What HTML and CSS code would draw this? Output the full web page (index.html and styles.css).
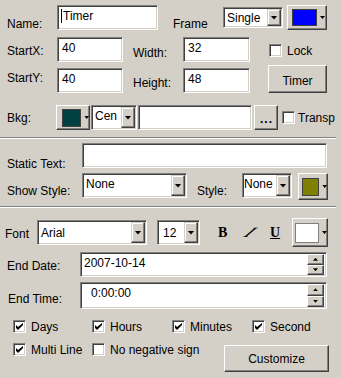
FILE: index.html
```html
<!DOCTYPE html>
<html>

  <head>
    <title>Timer Properties</title>
    <link rel="stylesheet" href="styles.css">
  </head>

  <body>
    <div class="dlg">
      <div class="row row-name">
        <span class="lbl lbl-left pt12">Name:</span>
        <div class="edit name-edit"><span class="caret"></span>Timer</div>
        <span class="lbl frame-lbl pt12">Frame</span>
        <div class="combo frame-combo"><span class="val">Single</span><span class="drop"><i class="arrow"></i></span></div>
        <div class="colorbtn frame-color"><span class="swatch"></span><i class="tri"></i></div>
      </div>

      <div class="row row-startx">
        <span class="lbl lbl-left pt7">StartX:</span>
        <div class="edit num-edit">40</div>
        <span class="lbl lbl-mid pt9">Width:</span>
        <div class="edit num-edit wide">32</div>
        <span class="check lock-check"></span>
        <span class="lbl check-lbl pt7">Lock</span>
      </div>

      <div class="row row-starty">
        <span class="lbl lbl-left pt3">StartY:</span>
        <div class="edit num-edit">40</div>
        <span class="lbl lbl-mid pt8">Height:</span>
        <div class="edit num-edit wide">48</div>
        <div class="btn timer-btn">Timer</div>
      </div>

      <div class="row row-bkg">
        <span class="lbl bkg-lbl pt6">Bkg:</span>
        <div class="colorbtn bkg-color"><span class="swatch"></span><i class="tri"></i></div>
        <div class="combo align-combo"><span class="val">Cen</span><span class="drop"><i class="arrow"></i></span></div>
        <div class="edit text-edit"></div>
        <div class="btn dots-btn">...</div>
        <span class="check transp-check"></span>
        <span class="lbl transp-lbl pt6">Transp</span>
      </div>

      <div class="sep sep-top"></div>

      <div class="row row-static">
        <span class="lbl wide-lbl pt14">Static Text:</span>
        <div class="edit static-edit"></div>
      </div>

      <div class="row row-show">
        <span class="lbl wide-lbl pt11">Show Style:</span>
        <div class="combo show-combo"><span class="val">None</span><span class="drop"><i class="arrow"></i></span></div>
        <span class="lbl style-lbl pt11">Style:</span>
        <div class="combo style-combo"><span class="val">None</span><span class="drop"><i class="arrow"></i></span></div>
        <div class="colorbtn style-color"><span class="swatch"></span><i class="tri"></i></div>
      </div>

      <div class="sep sep-mid"></div>

      <div class="row row-font">
        <span class="lbl font-lbl pt7">Font</span>
        <div class="combo font-combo"><span class="val">Arial</span><span class="drop"><i class="arrow"></i></span></div>
        <div class="combo size-combo"><span class="val">12</span><span class="drop"><i class="arrow"></i></span></div>
        <span class="fmt fmt-bold">B</span>
        <span class="fmt fmt-ital"><span>I</span></span>
        <span class="fmt fmt-under">U</span>
        <div class="colorbtn font-color"><span class="swatch"></span><i class="tri"></i></div>
      </div>

      <div class="row row-date">
        <span class="lbl date-lbl pt7">End Date:</span>
        <div class="spinfield">
          <span class="val">2007-10-14</span>
          <span class="spin"><span class="sbtn"><i class="up"></i></span><span class="sbtn"><i class="down"></i></span></span>
        </div>
      </div>

      <div class="row row-time">
        <span class="lbl time-lbl pt10">End Time:</span>
        <div class="spinfield tall">
          <span class="val time-val">0:00:00</span>
          <span class="spin"><span class="sbtn"><i class="up"></i></span><span class="sbtn"><i class="down"></i></span></span>
        </div>
      </div>

      <div class="row row-units">
        <label class="opt opt-days"><span class="check on"></span>Days</label>
        <label class="opt"><span class="check on"></span>Hours</label>
        <label class="opt"><span class="check on"></span>Minutes</label>
        <label class="opt"><span class="check on"></span>Second</label>
      </div>

      <div class="row row-flags">
        <label class="opt opt-days"><span class="check on"></span>Multi Line</label>
        <label class="opt opt-neg"><span class="check"></span>No negative sign</label>
        <div class="btn custom-btn">Customize</div>
      </div>
    </div>
  </body>

</html>
```

FILE: styles.css
```css
body {
  margin: 0;
  background-color: #d4d0c8;
}

.dlg {
  width: 341px;
  height: 378px;
  padding-top: 5px;
  box-sizing: border-box;
  font-family: "Liberation Sans", Arial, sans-serif;
  font-size: 12px;
  line-height: 14px;
  color: #000;
  overflow: hidden;
}

/* rows */

.row {
  display: flex;
  align-items: flex-start;
  height: 25px;
}

.row-startx { margin-top: 7px; }
.row-starty { margin-top: 6px; }
.row-bkg { margin-top: 12px; }
.row-static { margin-top: 4px; }
.row-show { margin-top: 5px; }
.row-font { margin-top: 12px; }
.row-date { margin-top: 7px; }
.row-time { margin-top: 5px; height: 27px; }
.row-units { margin-top: 11px; height: 13px; }
.row-flags { margin-top: 10px; height: 29px; }

.sep {
  width: 336px;
  height: 0;
  border-top: 1px solid #808080;
  border-bottom: 1px solid #fff;
}

.sep-top { margin-top: 7px; }
.sep-mid { margin-top: 8px; }

/* labels */

.lbl {
  flex: none;
  white-space: nowrap;
}

.pt3 { padding-top: 3px; }
.pt6 { padding-top: 6px; }
.pt7 { padding-top: 7px; }
.pt8 { padding-top: 8px; }
.pt9 { padding-top: 9px; }
.pt10 { padding-top: 10px; }
.pt11 { padding-top: 11px; }
.pt12 { padding-top: 12px; }
.pt14 { padding-top: 14px; }

.lbl-left { margin-left: 7px; width: 50px; }
.lbl-mid { margin-left: 10px; width: 50px; }
.frame-lbl { margin-left: 15px; width: 50px; }
.check-lbl { margin-left: 5px; }
.bkg-lbl { margin-left: 7px; width: 49px; }
.transp-lbl { margin-left: 3px; }
.wide-lbl { margin-left: 7px; width: 75px; }
.style-lbl { margin-left: 10px; width: 45px; }
.font-lbl { margin-left: 5px; width: 32px; }
.date-lbl { margin-left: 7px; width: 73px; }
.time-lbl { margin-left: 8px; width: 72px; }

/* sunken fields */

.edit,
.combo,
.spinfield,
.check {
  flex: none;
  box-sizing: border-box;
  background-color: #fff;
  border: 1px solid;
  border-color: #808080 #fff #fff #808080;
  box-shadow: inset 1px 1px 0 #404040, inset -1px -1px 0 #d4d0c8;
}

.edit {
  height: 25px;
  padding: 3px 4px;
  white-space: nowrap;
}

.name-edit { width: 101px; padding-left: 3px; }
.num-edit { width: 66px; }
.num-edit.wide { width: 67px; }
.text-edit { width: 114px; margin-left: 1px; }
.static-edit { width: 245px; }

.caret {
  display: inline-block;
  width: 1px;
  height: 14px;
  margin-right: 1px;
  vertical-align: -3px;
  background-color: #000;
}

.combo {
  display: flex;
  height: 25px;
  padding: 1px;
}

.combo .val {
  flex: 1;
  padding: 2px 0 0 2px;
  overflow: hidden;
  white-space: nowrap;
}

.frame-combo { width: 60px; height: 21px; margin-top: 2px; }
.align-combo { width: 46px; margin-left: 1px; }
.show-combo { width: 105px; }
.style-combo { width: 50px; }
.style-combo .val { padding-left: 0; }
.font-combo { width: 110px; }
.font-combo .val { padding-top: 4px; }
.size-combo { width: 43px; margin-left: 10px; }
.size-combo .val { padding: 4px 0 0 4px; }

/* raised parts */

.drop,
.sbtn,
.btn,
.colorbtn {
  box-sizing: border-box;
  background-color: #d4d0c8;
  border: 1px solid;
  border-color: #fff #404040 #404040 #fff;
  box-shadow: inset -1px -1px 0 #808080, inset 1px 1px 0 #d4d0c8;
}

.drop {
  flex: none;
  width: 14px;
  display: flex;
  align-items: center;
  justify-content: center;
  border-color: #d4d0c8 #404040 #404040 #d4d0c8;
  box-shadow: inset -1px -1px 0 #808080, inset 1px 1px 0 #fff;
}

.arrow {
  width: 7px;
  height: 4px;
  background-color: #000;
  clip-path: polygon(0 0, 100% 0, 50% 100%);
}

.btn {
  flex: none;
  display: flex;
  align-items: center;
  justify-content: center;
}

.timer-btn {
  width: 59px;
  height: 28px;
  margin: -3px 0 0 18px;
  padding-top: 3px;
}

.dots-btn {
  width: 24px;
  height: 25px;
  margin-left: 2px;
  font-weight: bold;
  letter-spacing: 1px;
  padding: 2px 0 0 1px;
}

.custom-btn {
  width: 105px;
  height: 27px;
  margin-top: 2px;
}

.colorbtn {
  flex: none;
  display: flex;
  align-items: center;
  height: 25px;
  padding-left: 4px;
}

.swatch {
  box-sizing: border-box;
  border: 1px solid #404040;
  margin-right: 3px;
}

.tri {
  width: 5px;
  height: 3px;
  background-color: #000;
  clip-path: polygon(0 0, 100% 0, 50% 100%);
}

.frame-color { width: 40px; margin-left: 4px; }
.frame-color .swatch { width: 25px; height: 17px; background-color: #0000ff; }

.bkg-color { width: 34px; padding-left: 5px; }
.bkg-color .swatch { width: 21px; height: 18px; background-color: #004040; }

.style-color { width: 30px; height: 27px; margin-left: 6px; padding-left: 3px; }
.style-color .swatch { width: 19px; height: 18px; background-color: #808000; }

.font-color { width: 36px; height: 29px; margin-top: -2px; padding-left: 2px; }
.font-color .swatch { width: 24px; height: 20px; background-color: #fff; border-color: #808080; }

/* check boxes */

.check {
  position: relative;
  width: 13px;
  height: 13px;
}

.check.on::after {
  content: "";
  position: absolute;
  left: 2px;
  top: 2px;
  width: 7px;
  height: 7px;
  background-color: #000;
  clip-path: polygon(0 29%, 0 71%, 29% 100%, 100% 29%, 100% 0, 29% 57%);
}

.lock-check { margin: 7px 0 0 19px; }
.transp-check { margin: 6px 0 0 4px; }

.opt {
  flex: none;
  display: flex;
  align-items: flex-start;
  width: 80px;
  white-space: nowrap;
}

.opt .check {
  margin-right: 5px;
}

.opt-days { margin-left: 13px; width: 79px; }
.opt-neg { width: 132px; }

.opt::after {
  content: "";
}

.opt {
  line-height: 14px;
}

.row-units .opt,
.row-flags .opt {
  padding-top: 0;
}

/* font style buttons */

.fmt {
  flex: none;
  font-family: "Liberation Serif", "Times New Roman", serif;
  font-size: 14px;
  font-weight: bold;
  padding-top: 6px;
}

.fmt-bold { margin-left: 18px; width: 24px; }
.fmt-ital { width: 28px; }
.fmt-under { width: 22px; text-decoration: underline; }

.fmt-ital span {
  display: inline-block;
  font-style: italic;
  transform: skewX(-45deg);
  margin-left: 5px;
}

/* date and time pickers */

.spinfield {
  display: flex;
  width: 247px;
  height: 25px;
  padding: 1px;
}

.spinfield.tall { height: 27px; }

.spinfield .val {
  flex: 1;
  padding: 2px 0 0 2px;
}

.spinfield .time-val { padding-left: 9px; }

.spin {
  display: flex;
  flex-direction: column;
  width: 17px;
  margin-right: 1px;
}

.sbtn {
  flex: 1;
  display: flex;
  align-items: center;
  justify-content: center;
}

.up,
.down {
  width: 5px;
  height: 3px;
  background-color: #000;
}

.up { clip-path: polygon(50% 0, 100% 100%, 0 100%); }
.down { clip-path: polygon(0 0, 100% 0, 50% 100%); }
```
